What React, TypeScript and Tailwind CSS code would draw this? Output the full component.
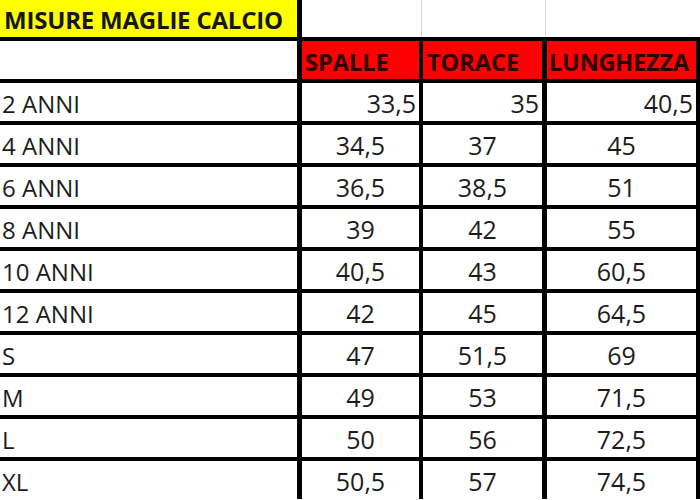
import React from "react";

const rows: [string, string, string, string][] = [
  ["4 ANNI", "34,5", "37", "45"],
  ["6 ANNI", "36,5", "38,5", "51"],
  ["8 ANNI", "39", "42", "55"],
  ["10 ANNI", "40,5", "43", "60,5"],
  ["12 ANNI", "42", "45", "64,5"],
  ["S", "47", "51,5", "69"],
  ["M", "49", "53", "71,5"],
  ["L", "50", "56", "72,5"],
  ["XL", "50,5", "57", "74,5"],
];

export default function App() {
  const font = { fontFamily: '"Open Sans", "Liberation Sans", sans-serif' };
  return (
    <div
      className="w-[700px] h-[500px] overflow-hidden bg-white text-[#1c1c1c] leading-none"
      style={font}
    >
      {/* title row */}
      <div className="flex h-[37px]">
        <div className="w-[302px] border-r-[5px] border-black bg-[#ffff00] pl-[4px] flex items-center pt-[3px] text-[24px] font-bold tracking-[-0.2px] text-[#161616]">
          MISURE MAGLIE CALCIO
        </div>
        <div className="w-[120px] border-r border-[#d4d4d4]" />
        <div className="w-[124px] border-r border-[#d4d4d4]" />
        <div className="flex-1" />
      </div>
      {/* header row */}
      <div className="flex h-[42px] border-t-4 border-black">
        <div className="w-[302px] border-r-[5px] border-black bg-white" />
        <div className="w-[121px] border-r-4 border-black bg-[#ff0000] pl-[3px] flex items-center pt-[5px] text-[23.5px] font-bold text-[#2a0000]">
          SPALLE
        </div>
        <div className="w-[124px] border-r-[5px] border-black bg-[#ff0000] pl-[4px] flex items-center pt-[5px] text-[23.5px] font-bold text-[#2a0000]">
          TORACE
        </div>
        <div className="w-[153px] border-r-4 border-black bg-[#ff0000] pl-[2px] flex items-center pt-[5px] text-[23.5px] font-bold text-[#2a0000] tracking-[-0.2px]">
          LUNGHEZZA
        </div>
      </div>
      {/* first data row, right aligned */}
      <div className="flex h-[42px] border-t-4 border-black text-[24px]">
        <div className="w-[302px] border-r-[5px] border-black pl-[2px] flex items-center pt-[3px]">
          2 ANNI
        </div>
        <div className="w-[121px] border-r-4 border-black pr-[3px] flex items-center justify-end pt-[3px] text-[25px]">
          33,5
        </div>
        <div className="w-[124px] border-r-[5px] border-black pr-[3px] flex items-center justify-end pt-[3px] text-[25px]">
          35
        </div>
        <div className="w-[153px] border-r-4 border-black pr-[3px] flex items-center justify-end pt-[3px] text-[25px]">
          40,5
        </div>
      </div>
      {rows.map(([a, b, c, d]) => (
        <div key={a} className="flex h-[42px] border-t-4 border-black text-[24px]">
          <div className="w-[302px] border-r-[5px] border-black pl-[2px] flex items-center pt-[3px]">
            {a}
          </div>
          <div className="w-[121px] border-r-4 border-black flex items-center justify-center pt-[3px] text-[25px]">
            {b}
          </div>
          <div className="w-[124px] border-r-[5px] border-black flex items-center justify-center pt-[3px] text-[25px]">
            {c}
          </div>
          <div className="w-[153px] border-r-4 border-black flex items-center justify-center pt-[3px] text-[25px]">
            {d}
          </div>
        </div>
      ))}
    </div>
  );
}
